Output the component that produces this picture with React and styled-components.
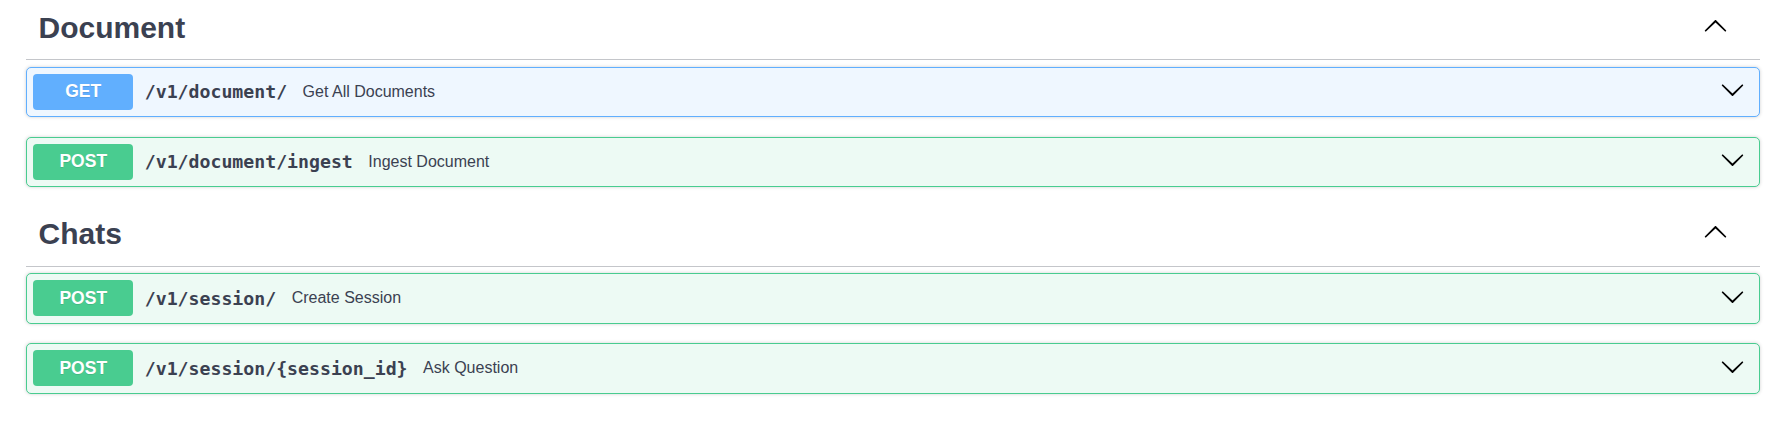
import React from 'react';
import styled, { createGlobalStyle } from 'styled-components';

const GlobalStyle = createGlobalStyle`
  * {
    box-sizing: border-box;
  }
  body {
    margin: 0;
    background: #fff;
    font-family: "Liberation Sans", Arial, sans-serif;
  }
`;

const METHODS = {
  get: { color: '#61affe', bg: '#eff7ff' },
  post: { color: '#49cc90', bg: '#edfaf4' },
};

const Page = styled.div`
  padding: 0 18px 0 26px;
`;

const Section = styled.section`
  margin-bottom: 2.6px;
`;

const TagHeading = styled.h3`
  display: flex;
  align-items: center;
  height: 60px;
  margin: 0 0 6.5px;
  padding: 0 32px 4px 12.5px;
  border-bottom: 1px solid rgba(59, 65, 81, 0.3);
  font-family: "Liberation Sans", Arial, sans-serif;
  font-size: 30px;
  font-weight: 700;
  color: #3b4151;
  cursor: pointer;
`;

const TagTitle = styled.span`
  flex: 1;
`;

const Arrow = styled.svg`
  width: 25px;
  height: 25px;
  flex: none;
  fill: #000;
  transform: ${(p) => (p.$up ? 'rotate(180deg)' : 'none')};
  margin-bottom: ${(p) => (p.$up ? '2.5px' : '4px')};
  margin-right: ${(p) => (p.$up ? '0' : '7.75px')};
`;

const Operation = styled.div`
  display: flex;
  align-items: center;
  margin-bottom: 19.5px;
  padding: 6.25px;
  border: 1px solid ${(p) => METHODS[p.$method].color};
  border-radius: 5px;
  background: ${(p) => METHODS[p.$method].bg};
  box-shadow: 0 0 3.75px rgba(0, 0, 0, 0.19);
  cursor: pointer;
`;

const Method = styled.span`
  min-width: 100px;
  padding: 7.5px 0;
  border-radius: 4px;
  background: ${(p) => METHODS[p.$method].color};
  color: #fff;
  font-family: "Liberation Sans", Arial, sans-serif;
  font-size: 17.5px;
  font-weight: 700;
  text-align: center;
  text-shadow: 0 1px 0 rgba(0, 0, 0, 0.1);
`;

const Path = styled.span`
  padding: 0 12.5px 0 11.5px;
  font-family: "DejaVu Sans Mono", monospace;
  font-size: 18.2px;
  font-weight: 700;
  color: #3b4151;
`;

const Description = styled.span`
  flex: 1;
  padding-left: 3px;
  font-family: "Liberation Sans", Arial, sans-serif;
  font-size: 16px;
  color: #3b4151;
`;

const Chevron = ({ up }) => (
  <Arrow $up={up} viewBox="0 0 20 20">
    <path d="M17.418 6.109c.272-.268.709-.268.979 0s.271.701 0 .969l-7.908 7.83c-.27.268-.707.268-.979 0l-7.908-7.83c-.27-.268-.27-.701 0-.969.271-.268.709-.268.979 0L10 13.25l7.418-7.141z" />
  </Arrow>
);

const sections = [
  {
    name: 'Document',
    ops: [
      { method: 'get', path: '/v1/document/', summary: 'Get All Documents' },
      { method: 'post', path: '/v1/document/ingest', summary: 'Ingest Document' },
    ],
  },
  {
    name: 'Chats',
    ops: [
      { method: 'post', path: '/v1/session/', summary: 'Create Session' },
      { method: 'post', path: '/v1/session/{session_id}', summary: 'Ask Question' },
    ],
  },
];

const App = () => (
  <>
    <GlobalStyle />
    <Page>
      {sections.map((section) => (
        <Section key={section.name}>
          <TagHeading>
            <TagTitle>{section.name}</TagTitle>
            <Chevron up />
          </TagHeading>
          {section.ops.map((op) => (
            <Operation key={op.path} $method={op.method}>
              <Method $method={op.method}>{op.method.toUpperCase()}</Method>
              <Path>{op.path}</Path>
              <Description>{op.summary}</Description>
              <Chevron />
            </Operation>
          ))}
        </Section>
      ))}
    </Page>
  </>
);

export default App;
